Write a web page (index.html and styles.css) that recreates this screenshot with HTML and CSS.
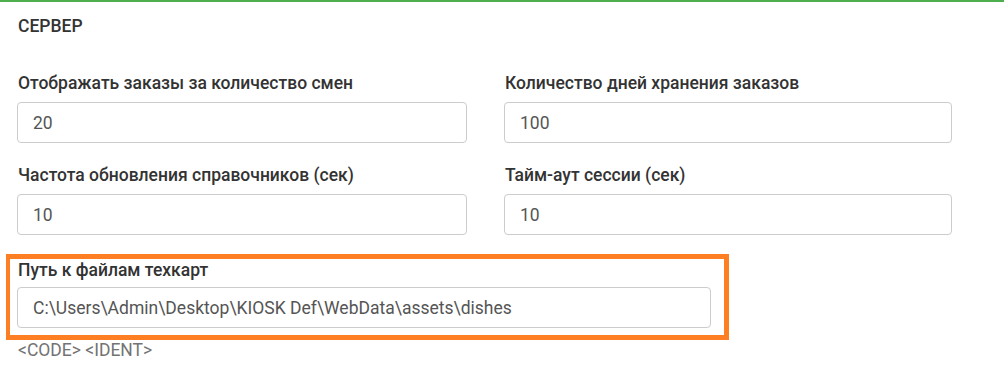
FILE: index.html
```html
<!DOCTYPE html>
<html lang="ru">
<head>
<meta charset="utf-8">
<link rel="stylesheet" href="styles.css">
</head>
<body>
<div class="panel">
  <div class="title">СЕРВЕР</div>
  <div class="grid">
    <div class="group">
      <label class="label">Отображать заказы за количество смен</label>
      <div class="input">20</div>
    </div>
    <div class="group">
      <label class="label">Количество дней хранения заказов</label>
      <div class="input">100</div>
    </div>
    <div class="group">
      <label class="label">Частота обновления справочников (сек)</label>
      <div class="input">10</div>
    </div>
    <div class="group">
      <label class="label">Тайм-аут сессии (сек)</label>
      <div class="input">10</div>
    </div>
  </div>
  <div class="highlight">
    <label class="label">Путь к файлам техкарт</label>
    <div class="input">C:\Users\Admin\Desktop\KIOSK Def\WebData\assets\dishes</div>
  </div>
  <div class="help">&lt;CODE&gt; &lt;IDENT&gt;</div>
</div>
</body>
</html>
```
FILE: styles.css
```css
html, body {
  margin: 0;
  padding: 0;
  background: #fff;
}
body {
  font-family: Roboto, "Liberation Sans", sans-serif;
  color: #333;
  width: 1004px;
  height: 370px;
  overflow: hidden;
}
.panel {
  border-top: 2px solid #4cae4c;
  padding: 0 0 0 17px;
}
.title {
  font-size: 17.5px;
  font-weight: 500;
  line-height: 22px;
  margin-top: 13px;
  padding-left: 1px;
}
.grid {
  display: grid;
  grid-template-columns: 450px 448px;
  column-gap: 37px;
  row-gap: 21px;
  margin-top: 35px;
}
.group {
  display: flex;
  flex-direction: column;
}
.label {
  display: block;
  font-size: 17.5px;
  font-weight: 500;
  line-height: 22px;
  margin-bottom: 8px;
  padding-left: 1px;
}
.input {
  box-sizing: border-box;
  height: 41px;
  border: 1px solid #ccc;
  border-radius: 4px;
  padding: 1px 15px 0;
  font-size: 17.5px;
  line-height: 38px;
  color: #555;
}
.highlight {
  margin: 19px 0 0 -11px;
  width: 723px;
  box-sizing: border-box;
  border: 5px solid #fd7e23;
  border-left-width: 4px;
  padding: 0 13px 7px 7px;
}
.highlight .label {
  margin-bottom: 6px;
}
.help {
  font-size: 17.5px;
  line-height: 20px;
  color: #737373;
  padding-left: 1px;
}
```
